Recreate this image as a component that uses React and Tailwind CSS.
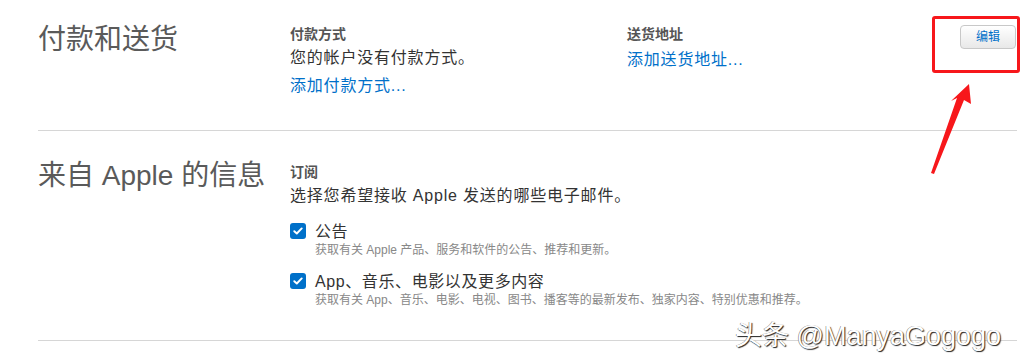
import React from "react"

const font = { fontFamily: '"Liberation Sans", "Noto Sans CJK SC", sans-serif' }

function Checkbox() {
  return (
    <span className="flex h-4 w-4 shrink-0 items-center justify-center rounded-[3px] bg-[#0070c9]">
      <svg width="10" height="8" viewBox="0 0 10 8" fill="none">
        <path d="M1.3 4.2 L3.8 6.5 L8.7 1.4" stroke="white" strokeWidth="1.9" strokeLinecap="round" strokeLinejoin="round" />
      </svg>
    </span>
  )
}

function Option({ title, desc }) {
  return (
    <div className="flex gap-[9px]">
      <div className="pt-[1px]">
        <Checkbox />
      </div>
      <div>
        <div className="text-[16px] leading-[20px] tracking-[0.6px] text-[#333]">{title}</div>
        <div className="text-[12px] leading-[16px] text-[#888]">{desc}</div>
      </div>
    </div>
  )
}

export default function App() {
  return (
    <div className="relative h-[361px] w-[1025px] overflow-hidden bg-white" style={font}>
      <div className="pl-[38px] pr-[8px]">
        {/* Payment & shipping */}
        <section className="grid h-[130px] grid-cols-[252px_337px_1fr] pt-[20px]">
          <h2 className="text-[28px] leading-[40px] text-[#5a5a5a]">付款和送货</h2>
          <div className="pt-[4px]">
            <div className="text-[14px] font-bold leading-[20px] text-[#555]">付款方式</div>
            <div className="text-[16px] leading-[28px] tracking-[0.8px] text-[#333]">您的帐户没有付款方式。</div>
            <div className="text-[16px] leading-[28px] tracking-[0.8px] text-[#0070c9]">添加付款方式...</div>
          </div>
          <div className="flex justify-between pt-[4px]">
            <div>
              <div className="text-[14px] font-bold leading-[20px] text-[#555]">送货地址</div>
              <div className="mt-[2px] text-[16px] leading-[28px] tracking-[0.8px] text-[#0070c9]">添加送货地址...</div>
            </div>
            <div className="pr-[1px]">
              <button className="h-[24px] w-[56px] rounded-[4px] border border-[#c8c8c8] bg-gradient-to-b from-white to-[#e8e8e8] text-[12px] text-[#0070c9]">
                编辑
              </button>
            </div>
          </div>
        </section>

        {/* Messages from Apple */}
        <section className="grid h-[210px] grid-cols-[252px_1fr] border-t border-[#d6d6d6] pt-[25px]">
          <h2 className="text-[28px] leading-[40px] text-[#5a5a5a]">来自 Apple 的信息</h2>
          <div className="pt-[6px]">
            <div className="text-[14px] font-bold leading-[20px] text-[#555]">订阅</div>
            <div className="text-[16px] leading-[28px] tracking-[0.8px] text-[#333]">选择您希望接收 Apple 发送的哪些电子邮件。</div>
            <div className="mt-[12px] flex flex-col gap-[14px]">
              <Option title="公告" desc="获取有关 Apple 产品、服务和软件的公告、推荐和更新。" />
              <Option
                title="App、音乐、电影以及更多内容"
                desc="获取有关 App、音乐、电影、电视、图书、播客等的最新发布、独家内容、特别优惠和推荐。"
              />
            </div>
          </div>
        </section>
        <div className="border-t border-[#d6d6d6]" />
      </div>

      {/* annotation: red box + arrow */}
      <div className="absolute left-[932px] top-[16px] h-[57px] w-[88px] rounded-[3px] border-[3px] border-[#f7171b]" />
      <svg className="absolute left-0 top-0" width="1025" height="361" viewBox="0 0 1025 361">
        <polygon points="969,84 971,104 964,100 934,174 931,173 957,98 951,101" fill="#f7171b" />
      </svg>

      {/* watermark */}
      <div
        className="absolute left-[735px] top-[319px] text-[27px] leading-[34px] text-white"
        style={{ textShadow: "1px 1px 1px #222, -0.5px -0.5px 0 #777" }}
      >
        头条 @ManyaGogogo
      </div>
    </div>
  )
}
